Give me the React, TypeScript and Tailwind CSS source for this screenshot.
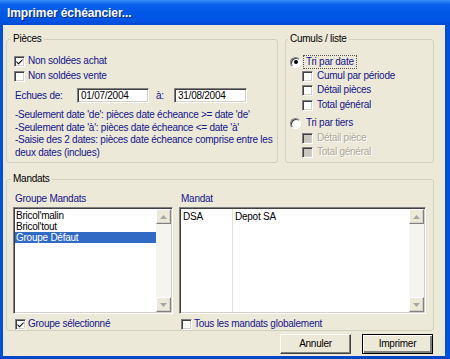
import React from "react";

const SUNKEN =
  "border border-t-[#808080] border-l-[#808080] border-b-white border-r-white shadow-[inset_1px_1px_0_#404040,inset_-1px_-1px_0_#d4d0c8]";

function Check({ checked = false, disabled = false }: { checked?: boolean; disabled?: boolean }) {
  return (
    <div
      className={`w-[11px] h-[11px] shrink-0 flex items-center justify-center ${SUNKEN} ${
        disabled ? "bg-[#c8c6bd]" : "bg-white"
      }`}
    >
      {checked && (
        <svg width="7" height="7" viewBox="0 0 7 7">
          <path d="M0.5 3 L2.5 5 L6.5 1 L6.5 2.6 L2.5 6.6 L0.5 4.6 Z" fill="#000" />
        </svg>
      )}
    </div>
  );
}

function Radio({ checked = false }: { checked?: boolean }) {
  return (
    <div className="w-[11px] h-[11px] shrink-0 rounded-full bg-white border border-t-[#808080] border-l-[#808080] border-b-white border-r-white shadow-[inset_1px_1px_0_#404040] flex items-center justify-center">
      {checked && <div className="w-[4px] h-[4px] rounded-full bg-black" />}
    </div>
  );
}

function Arrow({ up }: { up: boolean }) {
  return (
    <svg width="7" height="4" viewBox="0 0 7 4">
      {up ? <path d="M0 4 L3.5 0 L7 4 Z" fill="#a7a6a0" /> : <path d="M0 0 L3.5 4 L7 0 Z" fill="#a7a6a0" />}
    </svg>
  );
}

function ScrollBtn({ up }: { up: boolean }) {
  return (
    <div className="h-[15px] shrink-0 bg-[#ece9d8] border border-t-white border-l-white border-b-[#808080] border-r-[#808080] shadow-[inset_-1px_-1px_0_#d4d0c8] flex items-center justify-center">
      <Arrow up={up} />
    </div>
  );
}

function ScrollBar() {
  return (
    <div className="w-[15px] shrink-0 flex flex-col">
      <ScrollBtn up />
      <div className="flex-1 bg-[#f5f4ef]" />
      <ScrollBtn up={false} />
    </div>
  );
}

const BLUE = "text-[#14148a]";

export default function App() {
  return (
    <div className="w-[450px] h-[359px] flex flex-col font-['Liberation_Sans',Arial,sans-serif] text-[10px] leading-[12px] tracking-[-0.25px] select-none">
      {/* Title bar */}
      <div className="h-[25px] shrink-0 flex items-center pl-[7px] bg-[linear-gradient(to_bottom,#3a8cf8_0%,#0a62ec_18%,#0058e6_50%,#0054e3_85%,#0048d0_100%)]">
        <span className="text-white font-bold text-[12px] tracking-[-0.1px] [text-shadow:1px_1px_0_#0b2a8a]">Imprimer échéancier...</span>
      </div>

      {/* Body */}
      <div className="flex-1 flex flex-col border-l-[3px] border-r-[5px] border-b-[3px] border-l-[#0050de] border-r-[#0050de] border-b-[#0046c8] bg-[#ece9d8]">
        {/* Top row */}
        <div className="flex mt-[14px] ml-[3px]">
          {/* Pièces */}
          <div className="relative w-[272px] h-[124px] border border-[#d0d0bf] rounded-[3px]">
            <div className="absolute left-[4px] top-[-7px] px-[2px] bg-[#ece9d8] text-black">Pièces</div>
            <div className="flex items-center h-[14px] mt-[14px] pl-[7px]">
              <Check checked />
              <span className={`ml-[3px] ${BLUE}`}>Non soldées achat</span>
            </div>
            <div className="flex items-center h-[14px] mt-[1px] pl-[7px]">
              <Check />
              <span className={`ml-[3px] ${BLUE}`}>Non soldées vente</span>
            </div>
            <div className="flex items-center h-[15px] mt-[5px] pl-[8px]">
              <span className={`w-[62px] ${BLUE}`}>Echues de:</span>
              <div className={`w-[72px] h-[15px] bg-white pl-[3px] flex items-center text-black ${SUNKEN}`}>01/07/2004</div>
              <span className={`ml-[7px] w-[18px] ${BLUE}`}>à:</span>
              <div className={`w-[73px] h-[15px] bg-white pl-[3px] flex items-center text-black ${SUNKEN}`}>31/08/2004</div>
            </div>
            <div className={`mt-[6px] pl-[8px] leading-[12.5px] whitespace-nowrap ${BLUE}`}>
              -Seulement date 'de': pièces date écheance &gt;= date 'de'
              <br />
              -Seulement date 'à': pièces date écheance &lt;= date 'à'
              <br />
              -Saisie des 2 dates: pièces date écheance comprise entre les
              <br />
              deux dates (inclues)
            </div>
          </div>

          {/* Cumuls / liste */}
          <div className="relative ml-[7px] w-[149px] h-[124px] border border-[#d0d0bf] rounded-[3px]">
            <div className="absolute left-[2px] top-[-7px] px-[2px] bg-[#ece9d8] text-black">Cumuls / liste</div>
            <div className="flex items-center h-[14px] mt-[15px] pl-[4px]">
              <Radio checked />
              <span className={`ml-[2px] px-[2px] border border-dotted border-[#555] ${BLUE}`}>Tri par date</span>
            </div>
            {["Cumul par période", "Détail pièces", "Total général"].map((t, i) => (
              <div key={t} className={`flex items-center h-[14px] pl-[16px] ${i === 2 ? "mt-[1px]" : "mt-0"}`}>
                <Check />
                <span className={`ml-[4px] ${BLUE}`}>{t}</span>
              </div>
            ))}
            <div className="flex items-center h-[14px] mt-[4px] pl-[4px]">
              <Radio />
              <span className={`ml-[5px] ${BLUE}`}>Tri par tiers</span>
            </div>
            {["Détail pièce", "Total général"].map((t, i) => (
              <div key={t} className={`flex items-center h-[14px] pl-[16px] ${i === 0 ? "mt-[1px]" : "mt-0"}`}>
                <Check disabled />
                <span className="ml-[4px] text-[#aca899] [text-shadow:1px_1px_0_#ffffff]">{t}</span>
              </div>
            ))}
          </div>
        </div>

        {/* Mandats */}
        <div className="relative mt-[16px] ml-[3px] w-[428px] h-[152px] border border-[#d0d0bf] rounded-[3px]">
          <div className="absolute left-[4px] top-[-7px] px-[2px] bg-[#ece9d8] text-black">Mandats</div>
          <div className="flex pl-[6px]">
            {/* Left column */}
            <div className="w-[160px] flex flex-col">
              <div className={`h-[12px] mt-[13px] pl-[2px] ${BLUE}`}>Groupe Mandats</div>
              <div className={`mt-[2px] h-[107px] bg-white flex ${SUNKEN} p-[1px]`}>
                <div className="flex-1 flex flex-col text-black pt-[1px]">
                  <div className="h-[11px] leading-[11px] pl-[1px]">Bricol'malin</div>
                  <div className="h-[11px] leading-[11px] pl-[1px]">Bricol'tout</div>
                  <div className="h-[11px] leading-[11px] pl-[1px] bg-[#316ac5] text-white">Groupe Défaut</div>
                </div>
                <ScrollBar />
              </div>
              <div className="flex items-center h-[14px] mt-[3px] pl-[2px]">
                <Check checked />
                <span className={`ml-[2px] ${BLUE}`}>Groupe sélectionné</span>
              </div>
            </div>
            {/* Right column */}
            <div className="ml-[6px] w-[247px] flex flex-col">
              <div className={`h-[12px] mt-[13px] pl-[2px] ${BLUE}`}>Mandat</div>
              <div className={`mt-[2px] h-[107px] bg-white flex ${SUNKEN} p-[1px]`}>
                <div className="flex-1 flex text-black">
                  <div className="w-[52px] border-r border-[#e3e2dc] pl-[2px] pt-[2px] leading-[11px]">DSA</div>
                  <div className="flex-1 pl-[2px] pt-[2px] leading-[11px]">Depot SA</div>
                </div>
                <ScrollBar />
              </div>
              <div className="flex items-center h-[14px] mt-[3px] pl-[2px]">
                <Check />
                <span className={`ml-[2px] ${BLUE}`}>Tous les mandats globalement</span>
              </div>
            </div>
          </div>
        </div>

        {/* Buttons */}
        <div className="flex justify-end mt-[3px] mr-[12px] gap-[11px]">
          <button className="w-[71px] h-[20px] bg-[#ece9d8] text-black text-[10px] border border-t-white border-l-white border-b-[#404040] border-r-[#404040] shadow-[inset_-1px_-1px_0_#808080]">
            Annuler
          </button>
          <button className="w-[71px] h-[20px] bg-[#ece9d8] text-black text-[10px] border border-black shadow-[inset_1px_1px_0_#ffffff,inset_-2px_-2px_0_#808080]">
            Imprimer
          </button>
        </div>
      </div>
    </div>
  );
}
